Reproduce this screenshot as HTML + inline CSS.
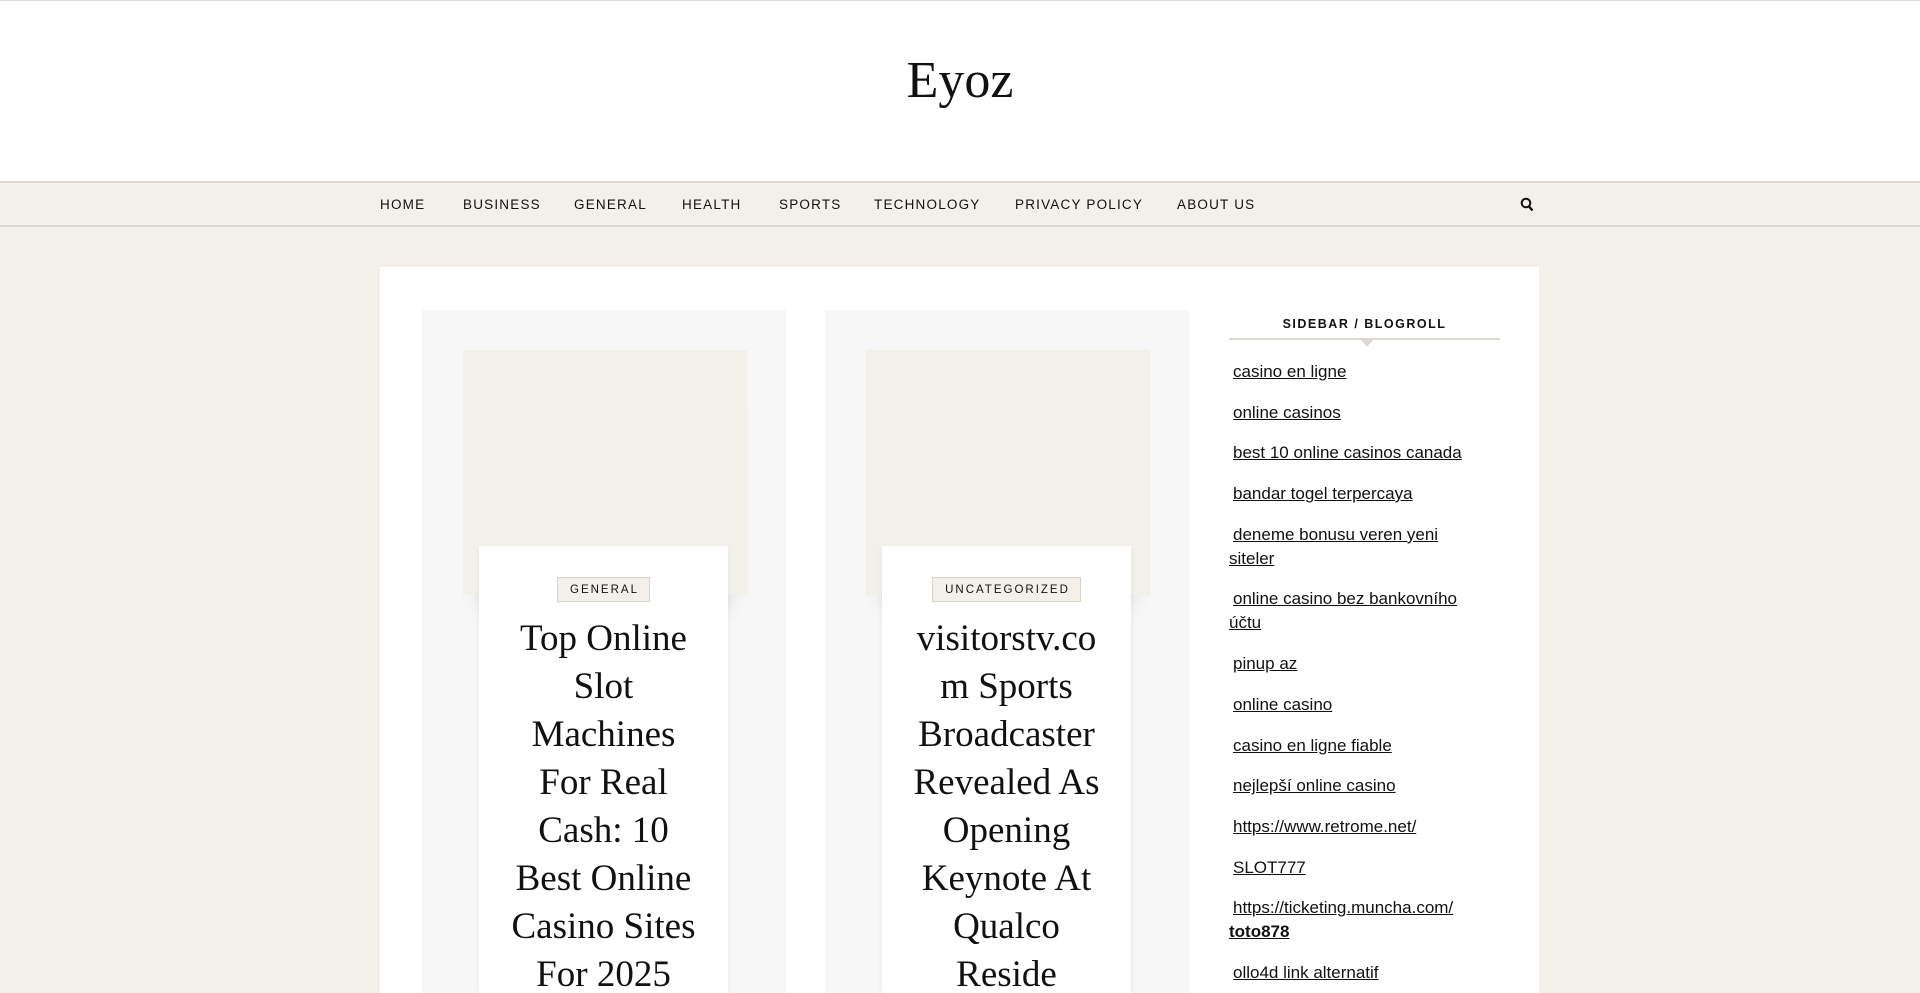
<!DOCTYPE html>
<html style="overflow:hidden;height:993px"><head><meta charset="utf-8">
<style>
*{margin:0;padding:0;box-sizing:border-box}
body{width:1920px;height:993px;overflow:hidden;background:#f3f0eb;font-family:"Liberation Sans",sans-serif;color:#111}
#w{position:relative;width:1920px;height:993px;overflow:hidden}
.hdr{position:absolute;left:0;top:0;width:1920px;height:181px;background:#fff;border-top:1px solid #ddd}
.logo{position:absolute;left:0;width:1920px;top:50px;text-align:center;font-family:"Liberation Serif",serif;font-size:52px;color:#111}
.nav{position:absolute;left:0;top:181px;width:1920px;height:46px;background:#f3f0eb;border-top:2px solid #dcd9d3;border-bottom:2px solid #dcd9d3}
.nav span{position:absolute;top:14px;font-size:13.5px;letter-spacing:1.2px;color:#111}
.box{position:absolute;left:380px;top:267px;width:1159px;height:726px;background:#fff}
.card{position:absolute;top:310px;width:364px;height:683px;background:#f7f7f7}
.img{position:absolute;top:40px;left:41px;width:284px;height:245px;background:#f3f0eb;box-shadow:0 30px 20px -18px rgba(0,0,0,.12)}
.inner{position:absolute;top:236px;left:57px;width:249px;height:447px;background:#fff;box-shadow:0 2px 6px rgba(0,0,0,.06);text-align:center;overflow:hidden}
.badge{display:inline-block;margin-top:31px;border:1px solid #d6d2c8;background:#f3f0eb;font-size:11.5px;letter-spacing:2px;padding:6px 10px 5px 12px}
.title{font-family:"Liberation Serif",serif;font-size:37px;line-height:48px;margin-top:13px;white-space:nowrap;color:#111}
.sh{position:absolute;left:1229px;top:317px;width:271px;text-align:center;font-size:12.5px;font-weight:bold;letter-spacing:1.5px}
.sl{position:absolute;left:1229px;top:338px;width:271px;height:2px;background:#dcd9d3}
.tri{position:absolute;left:1361px;top:340px;width:0;height:0;border-left:6px solid transparent;border-right:6px solid transparent;border-top:7px solid #dcd9d3}
.links{position:absolute;left:1229px;top:360px;width:249px;height:633px;overflow:hidden;font-size:17px;line-height:24px}
.links a{display:block;color:#111;text-decoration:underline;margin-bottom:16.7px;text-indent:4px}
</style></head><body><div id="w">
<div class="hdr"><div class="logo">Eyoz</div></div>
<div class="nav">
<span style="left:380px">HOME</span><span style="left:463px">BUSINESS</span><span style="left:574px">GENERAL</span><span style="left:682px">HEALTH</span><span style="left:779px">SPORTS</span><span style="left:874px">TECHNOLOGY</span><span style="left:1015px">PRIVACY POLICY</span><span style="left:1177px">ABOUT US</span>
<svg style="position:absolute;left:1520px;top:14px" width="14" height="15" viewBox="0 0 14 15"><circle cx="6" cy="6" r="4.3" fill="none" stroke="#111" stroke-width="2"/><path d="M9 9.5L12.5 13.5" stroke="#111" stroke-width="2.4"/></svg>
</div>
<div class="box"></div>
<div class="card" style="left:422px"><div class="img"></div>
<div class="inner"><span class="badge">GENERAL</span>
<div class="title">Top Online<br>Slot<br>Machines<br>For Real<br>Cash: 10<br>Best Online<br>Casino Sites<br>For 2025</div></div></div>
<div class="card" style="left:825px"><div class="img"></div>
<div class="inner"><span class="badge">UNCATEGORIZED</span>
<div class="title">visitorstv.co<br>m Sports<br>Broadcaster<br>Revealed As<br>Opening<br>Keynote At<br>Qualco<br>Reside</div></div></div>
<div class="sh">SIDEBAR / BLOGROLL</div><div class="sl"></div><div class="tri"></div>
<div class="links">
<a>casino en ligne</a><a>online casinos</a><a>best 10 online casinos canada</a><a>bandar togel terpercaya</a><a>deneme bonusu veren yeni siteler</a><a>online casino bez bankovního účtu</a><a>pinup az</a><a>online casino</a><a>casino en ligne fiable</a><a>nejlepší online casino</a><a>https://www.retrome.net/</a><a>SLOT777</a><a>https://ticketing.muncha.com/ <b>toto878</b></a><a>ollo4d link alternatif</a>
</div>
</div></body></html>
